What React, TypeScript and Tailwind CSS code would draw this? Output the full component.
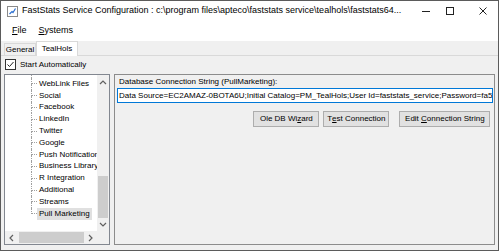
import React from 'react';

const TREE_ITEMS = [
  'WebLink Files',
  'Social',
  'Facebook',
  'LinkedIn',
  'Twitter',
  'Google',
  'Push Notification',
  'Business Library',
  'R Integration',
  'Additional',
  'Streams',
  'Pull Marketing',
];

const Chevron: React.FC<{ dir: 'up' | 'down' | 'left' | 'right' }> = ({ dir }) => {
  const pts = {
    up: '1,5 4,2 7,5',
    down: '1,2 4,5 7,2',
    left: '5,1 2,4 5,7',
    right: '2,1 5,4 2,7',
  }[dir];
  return (
    <svg width="8" height="8" viewBox="0 0 8 8">
      <polyline points={pts} fill="none" stroke="#606060" strokeWidth="1.2" />
    </svg>
  );
};

const App: React.FC = () => {
  return (
    <div className="w-[499px] h-[251px] overflow-hidden border border-[#5b5b5b] bg-[#f0f0f0] flex flex-col font-['Liberation_Sans',Arial,sans-serif] text-black">
      {/* Title bar */}
      <div className="h-[20px] bg-white flex items-center pl-[6px]">
        <svg width="11" height="11" viewBox="0 0 11 11">
          <rect x="0.5" y="0.5" width="10" height="10" fill="#fff" stroke="#8a8a8a" />
          <polyline points="2.5,8 5,5.5 6,6.5 8.5,2.5" fill="none" stroke="#2a6fd1" strokeWidth="1.2" />
        </svg>
        <div className="ml-[4px] flex-1 text-[9px] whitespace-nowrap overflow-hidden">
          FastStats Service Configuration : c:\program files\apteco\faststats service\tealhols\faststats64...
        </div>
        <svg width="8" height="8" viewBox="0 0 8 8" className="ml-[16px]">
          <line x1="0" y1="4.5" x2="8" y2="4.5" stroke="#222" strokeWidth="1" />
        </svg>
        <svg width="8" height="8" viewBox="0 0 8 8" className="ml-[16px]">
          <rect x="0.5" y="0.5" width="7" height="7" fill="none" stroke="#222" strokeWidth="1" />
        </svg>
        <svg width="8" height="8" viewBox="0 0 8 8" className="ml-[25px] mr-[11px]">
          <line x1="0.5" y1="0.5" x2="7.5" y2="7.5" stroke="#222" strokeWidth="1" />
          <line x1="7.5" y1="0.5" x2="0.5" y2="7.5" stroke="#222" strokeWidth="1" />
        </svg>
      </div>

      {/* Menu bar */}
      <div className="h-[20px] bg-white flex items-center pl-[11px] text-[9px]">
        <span><span className="underline">F</span>ile</span>
        <span className="ml-[12px]"><span className="underline">S</span>ystems</span>
      </div>

      {/* Tab strip */}
      <div className="h-[14px] flex items-end pl-[3px] text-[8px] relative z-10">
        <div className="w-[32px] h-[12px] border border-b-0 border-[#d9d9d9] bg-[#f0f0f0] flex items-center justify-center">
          General
        </div>
        <div className="w-[42px] h-[15px] -mb-px border border-b-0 border-[#d9d9d9] bg-white flex items-center justify-center">
          TealHols
        </div>
      </div>

      {/* Tab page */}
      <div className="flex-1 border-t border-[#d9d9d9] flex flex-col px-[3px] pb-[5px] text-[8px]">
        <div className="mt-[3px] flex items-center ml-[1px] h-[11px]">
          <div className="w-[11px] h-[11px] border border-[#333] bg-white flex items-center justify-center">
            <svg width="9" height="9" viewBox="0 0 9 9">
              <polyline points="1.5,4.5 3.5,6.5 7.5,2" fill="none" stroke="#222" strokeWidth="1" />
            </svg>
          </div>
          <span className="ml-[4px]">Start Automatically</span>
        </div>

        <div className="mt-[4px] flex-1 flex">
          {/* Tree view */}
          <div className="w-[106px] border border-[#828790] bg-white flex flex-col">
            <div className="flex-1 flex min-h-0">
              <div className="flex-1 min-w-0 overflow-hidden flex flex-col">
                <div className="h-[3px] shrink-0 ml-[26px] border-l border-dotted border-[#a0a0a0]" />
                {TREE_ITEMS.map((item, idx) => {
                  const last = idx === TREE_ITEMS.length - 1;
                  return (
                    <div key={item} className="h-[11.8px] shrink-0 flex ml-[26px]">
                      <div className="w-[6px] shrink-0 flex flex-col">
                        <div className="flex-1 border-l border-b border-dotted border-[#a0a0a0]" />
                        <div className={last ? 'flex-1' : 'flex-1 border-l border-dotted border-[#a0a0a0]'} />
                      </div>
                      <div
                        className={
                          'shrink-0 px-[2px] flex items-center whitespace-nowrap leading-none ' +
                          (last ? 'bg-[#e0e0e0]' : '')
                        }
                      >
                        {item}
                      </div>
                    </div>
                  );
                })}
              </div>
              {/* Vertical scrollbar */}
              <div className="w-[12px] shrink-0 bg-[#f0f0f0] flex flex-col">
                <div className="h-[15px] flex items-center justify-center">
                  <Chevron dir="up" />
                </div>
                <div className="flex-1 flex flex-col justify-end">
                  <div className="h-[42px] mx-[1px] bg-[#cdcdcd]" />
                </div>
                <div className="h-[13px] flex items-center justify-center">
                  <Chevron dir="down" />
                </div>
              </div>
            </div>
            {/* Horizontal scrollbar */}
            <div className="h-[13px] flex">
              <div className="flex-1 bg-[#f0f0f0] flex">
                <div className="w-[13px] flex items-center justify-center">
                  <Chevron dir="left" />
                </div>
                <div className="flex-1 py-[1px] pl-[1px]">
                  <div className="h-full bg-[#cdcdcd]" />
                </div>
                <div className="w-[13px] flex items-center justify-center">
                  <Chevron dir="right" />
                </div>
              </div>
              <div className="w-[12px] bg-[#f0f0f0]" />
            </div>
          </div>

          {/* Right panel */}
          <div className="ml-[4px] flex-1 border border-[#8c8c8c] flex flex-col">
            <div className="mt-[2px] ml-[4px] h-[9px] leading-[9px] whitespace-nowrap">
              Database Connection String (PullMarketing):
            </div>
            <div className="mt-[2px] ml-[2px] mr-[1px] h-[15px] border border-[#0078d7] bg-white flex items-center pl-[1px] overflow-hidden whitespace-nowrap">
              Data Source=EC2AMAZ-0BOTA6U;Initial Catalog=PM_TealHols;User Id=faststats_service;Password=fa5
            </div>
            <div className="mt-[8px] mr-[4px] flex justify-end">
              <button className="w-[66px] h-[16px] border border-[#adadad] bg-[#e1e1e1] flex items-center justify-center whitespace-pre">
                Ole DB Wi<span className="underline">z</span>ard
              </button>
              <button className="ml-[4px] w-[66px] h-[16px] border border-[#adadad] bg-[#e1e1e1] flex items-center justify-center whitespace-pre">
                T<span className="underline">e</span>st Connection
              </button>
              <button className="ml-[10px] w-[91px] h-[16px] border border-[#adadad] bg-[#e1e1e1] flex items-center justify-center whitespace-pre">
                {'Edit '}<span className="underline">C</span>onnection String
              </button>
            </div>
          </div>
        </div>
      </div>
    </div>
  );
};

export default App;
